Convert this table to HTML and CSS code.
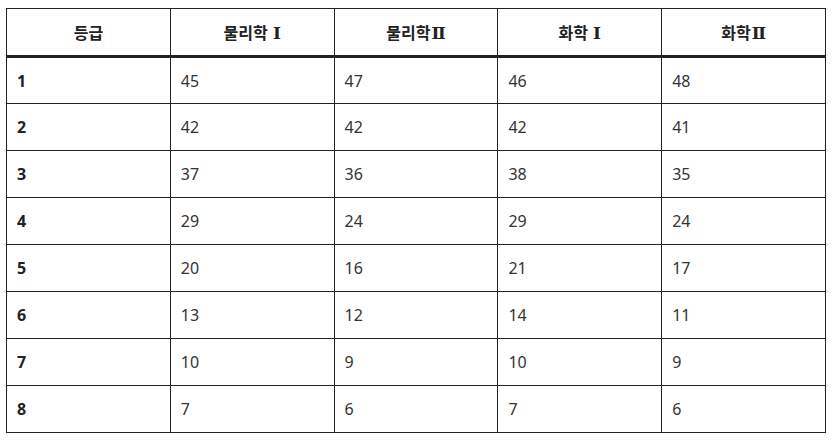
FILE: index.html
```html
<!DOCTYPE html>
<html lang="ko">
<head>
<meta charset="utf-8">
<link rel="stylesheet" href="styles.css">
</head>
<body>
<table class="grade-table">
  <thead>
    <tr><th>등급</th><th>물리학 <span class="num">Ⅰ</span></th><th>물리학<span class="num">Ⅱ</span></th><th>화학 <span class="num">Ⅰ</span></th><th>화학<span class="num">Ⅱ</span></th></tr>
  </thead>
  <tbody>
    <tr><td>1</td><td>45</td><td>47</td><td>46</td><td>48</td></tr>
    <tr><td>2</td><td>42</td><td>42</td><td>42</td><td>41</td></tr>
    <tr><td>3</td><td>37</td><td>36</td><td>38</td><td>35</td></tr>
    <tr><td>4</td><td>29</td><td>24</td><td>29</td><td>24</td></tr>
    <tr><td>5</td><td>20</td><td>16</td><td>21</td><td>17</td></tr>
    <tr><td>6</td><td>13</td><td>12</td><td>14</td><td>11</td></tr>
    <tr><td>7</td><td>10</td><td>9</td><td>10</td><td>9</td></tr>
    <tr><td>8</td><td>7</td><td>6</td><td>7</td><td>6</td></tr>
  </tbody>
</table>
</body>
</html>
```
FILE: styles.css
```css
html, body {
  margin: 0;
  padding: 0;
  background: #fff;
}
body {
  padding: 8px 8px 0 6px;
  font-family: "Noto Sans", "Noto Sans CJK KR", sans-serif;
  font-size: 16px;
  color: #333;
}
.grade-table {
  width: 820px;
  border-collapse: collapse;
  table-layout: fixed;
}
.grade-table th,
.grade-table td {
  border: 1px solid #222;
  height: 47px;
  padding: 0 10px;
  box-sizing: border-box;
}
.grade-table th {
  font-weight: bold;
  text-align: center;
  color: #222;
  border-bottom: 3px solid #222;
  height: 48px;
}
.grade-table th .num {
  font-family: "DejaVu Serif", "Liberation Serif", serif;
  font-size: 17px;
  margin-left: 1px;
}
.grade-table td {
  text-align: left;
}
.grade-table td:first-child {
  font-weight: bold;
  color: #222;
}
```
